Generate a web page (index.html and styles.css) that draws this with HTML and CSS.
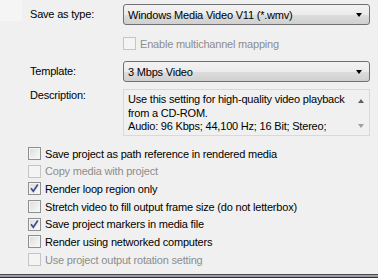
FILE: index.html
```html
<!DOCTYPE html>
<html>
<head>
<meta charset="utf-8">
<link rel="stylesheet" href="styles.css">
</head>
<body>
<div class="corner"></div>
<div class="page">
  <div class="form">
    <div class="label r1">Save as type:</div>
    <div class="combo r1"><span>Windows Media Video V11 (*.wmv)</span><span class="arrow"></span></div>

    <div class="cbrow r2 full-right">
      <span class="cb disabled"></span><span class="cbtext dis">Enable multichannel mapping</span>
    </div>

    <div class="label r3">Template:</div>
    <div class="combo r3"><span>3 Mbps Video</span><span class="arrow"></span></div>

    <div class="label r4">Description:</div>
    <div class="desc r4">
      <div class="desctext">Use this setting for high-quality video playback<br>from a CD-ROM.<br>Audio: 96 Kbps; 44,100 Hz; 16 Bit; Stereo;</div>
      <div class="scroll">
        <span class="up"></span>
        <span class="down"></span>
      </div>
    </div>
  </div>

  <div class="checks">
    <div class="cbrow"><span class="cb"></span><span class="cbtext">Save project as path reference in rendered media</span></div>
    <div class="cbrow"><span class="cb disabled"></span><span class="cbtext dis">Copy media with project</span></div>
    <div class="cbrow"><span class="cb checked"><svg viewBox="0 0 13 13" width="13" height="13"><path d="M3 6.2 L5.3 9.2 L9.8 2.6" fill="none" stroke="#3c4f8a" stroke-width="1.7"/></svg></span><span class="cbtext">Render loop region only</span></div>
    <div class="cbrow"><span class="cb"></span><span class="cbtext">Stretch video to fill output frame size (do not letterbox)</span></div>
    <div class="cbrow"><span class="cb checked"><svg viewBox="0 0 13 13" width="13" height="13"><path d="M3 6.2 L5.3 9.2 L9.8 2.6" fill="none" stroke="#3c4f8a" stroke-width="1.7"/></svg></span><span class="cbtext">Save project markers in media file</span></div>
    <div class="cbrow"><span class="cb"></span><span class="cbtext">Render using networked computers</span></div>
    <div class="cbrow"><span class="cb disabled"></span><span class="cbtext dis">Use project output rotation setting</span></div>
  </div>
</div>
<div class="bottombar"></div>
</body>
</html>
```

FILE: styles.css
```css
html, body {
  margin: 0;
  padding: 0;
}
body {
  width: 378px;
  height: 278px;
  overflow: hidden;
  background: #f0f0f0;
  font-family: "Liberation Sans", Arial, sans-serif;
  font-size: 11px;
  letter-spacing: -0.2px;
  color: #000;
  position: relative;
}
.corner {
  position: absolute;
  left: 0;
  top: 0;
  width: 22px;
  height: 21px;
  background: #f5f5f5;
}
.page {
  height: 274px;
  display: flex;
  flex-direction: column;
}
.form {
  display: grid;
  grid-template-columns: 93px 247px;
  padding: 4px 0 0 30px;
  align-items: start;
}
.label {
  line-height: 13px;
  padding-top: 4px;
}
.r1 { grid-row: 1; }
.r2 { grid-row: 2; grid-column: 2; margin-top: 12px; }
.r3 { grid-row: 3; margin-top: 11px; }
.r4 { grid-row: 4; margin-top: 7px; }
.label.r4 { padding-top: 0; margin-top: 7px; }
.combo {
  grid-column: 2;
  height: 19px;
  border: 1px solid #707070;
  border-radius: 3px;
  background: linear-gradient(#f3f3f3 0%, #ebebeb 50%, #dddddd 51%, #d0d0d0 100%);
  display: flex;
  align-items: center;
  justify-content: space-between;
  padding: 0 7px 0 4px;
  box-sizing: content-box;
  width: 234px;
}
.arrow {
  width: 0;
  height: 0;
  border-left: 3.5px solid transparent;
  border-right: 3.5px solid transparent;
  border-top: 4px solid #000;
  margin-top: 1px;
}
.desc {
  grid-column: 2;
  height: 45px;
  border: 1px solid #d9d9d9;
  background: #f0f0f0;
  display: flex;
  position: relative;
}
.desctext {
  flex: 1;
  padding: 3px 0 0 4px;
  line-height: 13.5px;
  color: #000;
  white-space: nowrap;
}
.scroll {
  width: 17px;
  display: flex;
  flex-direction: column;
  justify-content: space-between;
  align-items: center;
  padding: 9px 0 7px;
}
.up {
  width: 0;
  height: 0;
  border-left: 3.5px solid transparent;
  border-right: 3.5px solid transparent;
  border-bottom: 4px solid #606060;
}
.down {
  width: 0;
  height: 0;
  border-left: 3.5px solid transparent;
  border-right: 3.5px solid transparent;
  border-top: 4px solid #a0a0a0;
}
.cbrow {
  display: flex;
  align-items: center;
  height: 13px;
}
.cb {
  width: 11px;
  height: 11px;
  border: 1px solid #8e8f8f;
  background: linear-gradient(135deg, #dcdcdc, #fbfbfb);
  box-shadow: inset 0 0 0 1px #f4f4f4;
  position: relative;
  flex: none;
}
.cb svg {
  position: absolute;
  left: -1px;
  top: -1px;
}
.cb.disabled {
  border-color: #c5c5c5;
  background: #f4f4f4;
  box-shadow: none;
}
.cbtext {
  margin-left: 4px;
  white-space: nowrap;
}
.cbtext.dis {
  color: #8d8d8d;
}
.checks {
  display: flex;
  flex-direction: column;
  gap: 4.7px;
  padding: 11px 0 0 28px;
}
.bottombar {
  position: absolute;
  left: 0;
  bottom: 0;
  width: 378px;
  height: 4px;
  background: linear-gradient(#4a4a4a 0, #4a4a4a 1px, #a6a8b4 1px, #8d90a0 3px, #333 3px);
}
```
